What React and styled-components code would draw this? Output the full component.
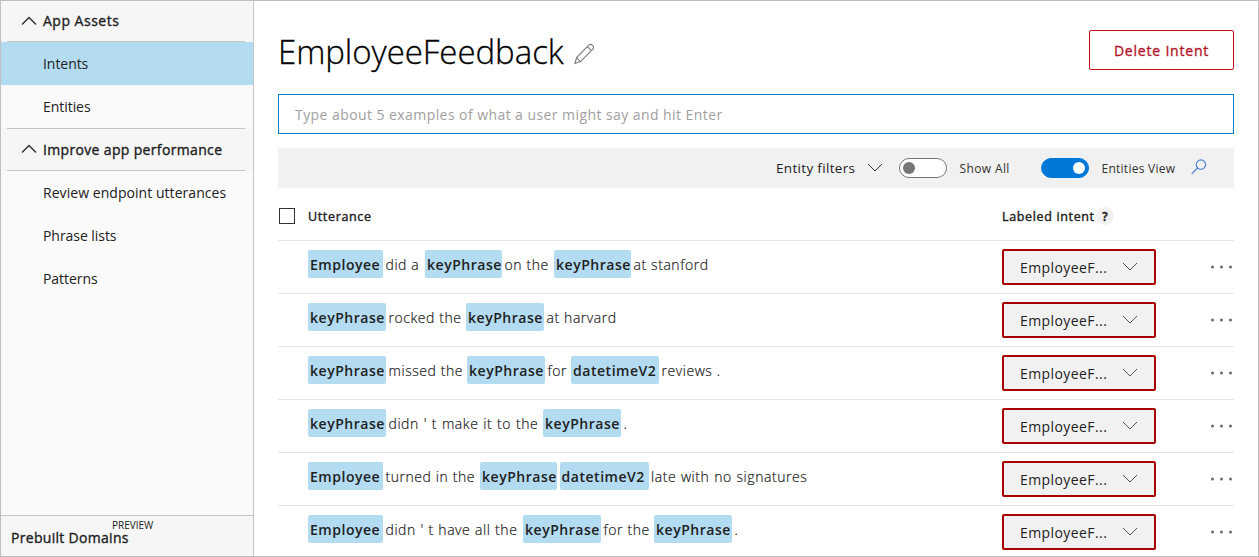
import React from 'react';
import styled, { createGlobalStyle } from 'styled-components';

const GlobalStyle = createGlobalStyle`
  * { box-sizing: border-box; }
  body { margin: 0; background: #fff; }
`;

const Page = styled.div`
  display: flex;
  width: 1259px;
  height: 557px;
  overflow: hidden;
  border: 1px solid #bfbfbf;
  background: #fff;
  color: #212121;
  font-family: 'Open Sans', 'Noto Sans', sans-serif;
  font-size: 14px;
  white-space: nowrap;
`;

const Sidebar = styled.nav`
  flex: none;
  display: flex;
  flex-direction: column;
  width: 253px;
  border-right: 1px solid #c6c6c6;
  background: #fafafa;
`;

const SectionHeader = styled.div`
  display: flex;
  flex-direction: column;
  height: ${(p) => p.$height}px;
  padding: 0 8px 0 6px;
  background: #f6f6f6;
`;

const SectionTitle = styled.div`
  flex: 1;
  display: flex;
  align-items: center;
  gap: 6px;
  padding: 0 0 1px 14px;
  border-top: ${(p) => (p.$ruled ? '1px solid #c6c6c6' : '0')};
  border-bottom: 1px solid #c6c6c6;
  letter-spacing: ${(p) => p.$spacing}px;
  -webkit-text-stroke: 0.35px;
`;

const NavItem = styled.div`
  display: flex;
  align-items: center;
  height: 43px;
  padding-left: 42px;
  background: ${(p) => (p.$active ? '#b3dbf2' : 'transparent')};
  letter-spacing: ${(p) => p.$spacing ?? -0.05}px;
`;

const SidebarFooter = styled.div`
  display: flex;
  align-items: flex-start;
  height: 41px;
  margin-top: auto;
  padding-left: 10px;
  border-top: 1px solid #c6c6c6;
  background: #f6f6f6;
`;

const FooterLabel = styled.span`
  width: 101px;
  padding-top: 12px;
  line-height: 20px;
  letter-spacing: 0.3px;
  -webkit-text-stroke: 0.35px;
`;

const PreviewTag = styled.sup`
  padding-top: 3px;
  font-size: 10px;
  line-height: 12px;
`;

const Main = styled.main`
  flex: 1;
  min-width: 0;
  padding: 0 24px 0 24px;
`;

const Header = styled.header`
  display: flex;
  height: 93px;
`;

const Title = styled.h1`
  margin: 26px 0 0;
  width: 295px;
  color: #000;
  font-size: 33px;
  line-height: 50px;
  font-weight: 300;
  letter-spacing: -0.05px;
  -webkit-text-stroke: 0.3px;
`;

const EditIcon = styled.svg`
  margin-top: 42px;
`;

const DeleteButton = styled.button`
  width: 145px;
  height: 40px;
  margin: 29px 0 0 auto;
  padding: 0;
  border: 1px solid #c50f1f;
  border-radius: 2px;
  background: #fff;
  color: #b4162c;
  font: 400 14px 'Open Sans', sans-serif;
  letter-spacing: 0.8px;
  -webkit-text-stroke: 0.35px;
`;

const UtteranceInput = styled.input`
  display: block;
  width: 100%;
  height: 40px;
  padding: 0 16px;
  border: 1px solid #0f7dcb;
  outline: 0;
  background: #fff;
  font: 400 14px 'Open Sans', sans-serif;
  letter-spacing: 0.43px;
  &::placeholder { color: #a0a0a0; opacity: 1; }
`;

const Toolbar = styled.div`
  display: flex;
  align-items: center;
  height: 40px;
  margin-top: 14px;
  padding-left: 498px;
  background: #f1f1f1;
`;

const FilterButton = styled.div`
  display: flex;
  align-items: center;
  justify-content: space-between;
  width: 107px;
  margin-right: 16px;
  font-size: 13.5px;
  letter-spacing: 0.32px;
`;

const Switch = styled.span`
  display: flex;
  align-items: center;
  justify-content: ${(p) => (p.$on ? 'flex-end' : 'flex-start')};
  width: 48px;
  height: 20px;
  padding: 0 3px;
  border: 1px solid ${(p) => (p.$on ? '#0078d7' : '#767676')};
  border-radius: 10px;
  background: ${(p) => (p.$on ? '#0078d7' : '#fff')};
  &::after {
    content: '';
    width: 12px;
    height: 12px;
    border-radius: 50%;
    background: ${(p) => (p.$on ? '#fff' : '#767676')};
  }
`;

const SwitchLabel = styled.span`
  width: ${(p) => p.$width}px;
  padding-left: 12.5px;
  color: #333;
  font-size: 12px;
  letter-spacing: ${(p) => p.$spacing}px;
`;

const TableHead = styled.div`
  display: flex;
  align-items: center;
  height: 53px;
  padding-top: 4px;
  border-bottom: 1px solid #e3e3e3;
  font-size: 12.5px;
  -webkit-text-stroke: 0.4px;
`;

const Checkbox = styled.span`
  width: 16px;
  height: 16px;
  margin: 0 0 1px 1px;
  border: 1px solid #333;
`;

const HeadLabel = styled.span`
  width: ${(p) => p.$width}px;
  margin-left: ${(p) => p.$gap ?? 0}px;
  letter-spacing: 0.65px;
`;

const HelpBadge = styled.span`
  display: grid;
  place-items: center;
  width: 18px;
  height: 18px;
  border-radius: 50%;
  background: #f1f1f1;
  font-size: 12px;
  font-weight: 600;
`;

const Row = styled.div`
  display: flex;
  height: 53px;
  border-bottom: 1px solid #e3e3e3;
`;

const Utterance = styled.div`
  display: flex;
  width: 724px;
  padding: 9px 0 0 30px;
  line-height: 30px;
`;

const tagWidths = { Employee: 75, keyPhrase: 78, datetimeV2: 88 };

const EntityTag = styled.span`
  flex: none;
  width: ${(p) => p.$width ?? tagWidths[p.children]}px;
  height: 28px;
  padding-left: 2px;
  border-radius: 2px;
  background: #b3dbf2;
  font-weight: 600;
  letter-spacing: 0.53px;
`;

const Words = styled.span`
  flex: none;
  width: ${(p) => (p.$width ? `${p.$width}px` : 'auto')};
  padding-left: 2.5px;
  font-weight: 300;
  letter-spacing: 0.55px;
  word-spacing: ${(p) => p.$wordSpacing ?? 0.2}px;
  -webkit-text-stroke: 0.2px;
`;

const IntentSelect = styled.div`
  display: flex;
  align-items: center;
  justify-content: space-between;
  width: 154px;
  height: 36px;
  margin-top: 8px;
  padding: 0 16px;
  border: 2px solid #a80000;
  border-radius: 2px;
  background: #f1f1f1;
  letter-spacing: 0.42px;
`;

const MoreIcon = styled.svg`
  margin: 23px 0 0 auto;
`;

const Chevron = ({ up = false, color = '#333', width = 1 }) => (
  <svg width="16" height="10" viewBox="0 0 16 10" fill="none" stroke={color} strokeWidth={width}>
    <path d={up ? 'M1 8.5 8 1.5 15 8.5' : 'M1 1 8 8 15 1'} />
  </svg>
);

const SelectLabel = styled.span`
  padding-top: 1px;
`;

const SearchIcon = () => (
  <svg width="16" height="18" viewBox="0 0 16 18" fill="none" stroke="#4a7dd6" strokeWidth="1.1">
    <circle cx="9.9" cy="5.6" r="4.7" />
    <path d="M6.5 9 .7 14.8" />
  </svg>
);

const rows = [
  [['Employee'], ['did a', 42], ['keyPhrase', 77], ['on the', 52], ['keyPhrase', 77], ['at stanford']],
  [['keyPhrase'], ['rocked the', 80], ['keyPhrase'], ['at harvard']],
  [['keyPhrase'], ['missed the', 81], ['keyPhrase'], ['for', 26], ['datetimeV2'], ['reviews .']],
  [['keyPhrase'], ["didn ' t make it to the", 157, 0.7], ['keyPhrase'], ['.']],
  [['Employee'], ['turned in the', 97], ['keyPhrase', 77], ['', 2], ['datetimeV2', 89], ['late with no signatures', undefined, 0.6]],
  [['Employee'], ["didn ' t have all the", 140, 0.5], ['keyPhrase'], ['for the', 53], ['keyPhrase'], ['.']],
];

export default function App() {
  return (
    <Page>
      <GlobalStyle />
      <Sidebar>
        <SectionHeader $height={41}>
          <SectionTitle $spacing={0.5}><Chevron up width={1.5} />App Assets</SectionTitle>
        </SectionHeader>
        <NavItem $active>Intents</NavItem>
        <NavItem>Entities</NavItem>
        <SectionHeader $height={43}>
          <SectionTitle $ruled $spacing={0.34}><Chevron up width={1.5} />Improve app performance</SectionTitle>
        </SectionHeader>
        <NavItem $spacing={0.05}>Review endpoint utterances</NavItem>
        <NavItem>Phrase lists</NavItem>
        <NavItem>Patterns</NavItem>
        <SidebarFooter>
          <FooterLabel>Prebuilt Domains</FooterLabel>
          <PreviewTag>PREVIEW</PreviewTag>
        </SidebarFooter>
      </Sidebar>
      <Main>
        <Header>
          <Title>EmployeeFeedback</Title>
          <EditIcon width="22" height="22" viewBox="0 0 22 22" fill="none" stroke="#777" strokeWidth="1.1">
            <path d="M2 20.5 3.6 14.6 15.8 2.2Q17.7.5 19.6 2.3 21.4 4.3 19.8 6.2L7.6 18.6ZM3.6 14.6Q4.3 16 5.6 16.2 5.8 18 7.6 18.6M14.4 3.6 18.4 7.6" />
          </EditIcon>
          <DeleteButton>Delete Intent</DeleteButton>
        </Header>
        <UtteranceInput placeholder="Type about 5 examples of what a user might say and hit Enter" />
        <Toolbar>
          <FilterButton>Entity filters<Chevron /></FilterButton>
          <Switch />
          <SwitchLabel $width={94} $spacing={0.38}>Show All</SwitchLabel>
          <Switch $on />
          <SwitchLabel $width={102} $spacing={0.26}>Entities View</SwitchLabel>
          <SearchIcon />
        </Toolbar>
        <TableHead>
          <Checkbox />
          <HeadLabel $width={694} $gap={13}>Utterance</HeadLabel>
          <HeadLabel $width={94}>Labeled intent</HeadLabel>
          <HelpBadge>?</HelpBadge>
        </TableHead>
        {rows.map((parts, i) => (
          <Row key={i}>
            <Utterance>
              {parts.map(([text, width, wordSpacing], j) =>
                text in tagWidths
                  ? <EntityTag key={j} $width={width}>{text}</EntityTag>
                  : <Words key={j} $width={width} $wordSpacing={wordSpacing}>{text}</Words>
              )}
            </Utterance>
            <IntentSelect><SelectLabel>EmployeeF...</SelectLabel><Chevron color="#555" /></IntentSelect>
            <MoreIcon width="24" height="6" viewBox="0 0 24 6" fill="#6a6a6a">
              <circle cx="2.5" cy="3" r="1.5" />
              <circle cx="11.5" cy="3" r="1.5" />
              <circle cx="20.5" cy="3" r="1.5" />
            </MoreIcon>
          </Row>
        ))}
      </Main>
    </Page>
  );
}
